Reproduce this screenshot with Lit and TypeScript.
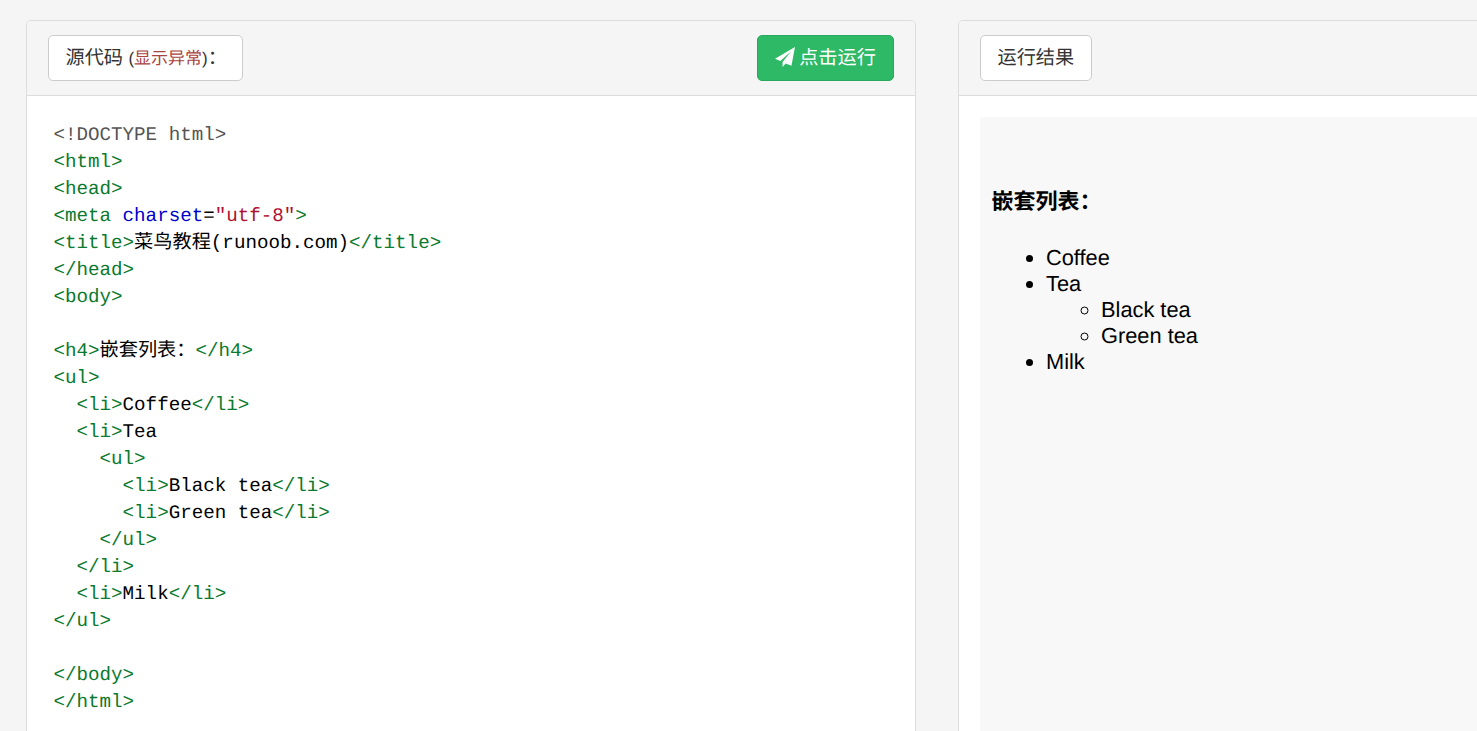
import { LitElement, html, css } from "lit";
import { customElement } from "lit/decorators.js";

const T = (s: string) => html`<span class="tag">${s}</span>`;

const CODE = [
  html`<span class="doc">&lt;!DOCTYPE html&gt;</span>`,
  T("<html>"),
  T("<head>"),
  html`<span class="tag">&lt;meta</span> <span class="attr">charset</span>=<span class="str">"utf-8"</span><span class="tag">&gt;</span>`,
  html`${T("<title>")}菜鸟教程(runoob.com)${T("</title>")}`,
  T("</head>"),
  T("<body>"),
  html``,
  html`${T("<h4>")}嵌套列表：${T("</h4>")}`,
  T("<ul>"),
  html`  ${T("<li>")}Coffee${T("</li>")}`,
  html`  ${T("<li>")}Tea`,
  html`    ${T("<ul>")}`,
  html`      ${T("<li>")}Black tea${T("</li>")}`,
  html`      ${T("<li>")}Green tea${T("</li>")}`,
  html`    ${T("</ul>")}`,
  html`  ${T("</li>")}`,
  html`  ${T("<li>")}Milk${T("</li>")}`,
  T("</ul>"),
  html``,
  T("</body>"),
  T("</html>"),
];

@customElement("app-root")
export class AppRoot extends LitElement {
  static styles = css`
    :host {
      display: block;
      height: 731px;
      overflow: hidden;
      background: #f5f5f5;
      font-family: "Liberation Sans", "Noto Sans CJK SC", sans-serif;
      text-rendering: geometricPrecision;
    }
    .page {
      display: flex;
      gap: 42px;
      padding: 20px 0 0 26px;
      width: 2000px;
      box-sizing: border-box;
    }
    .panel {
      flex: 0 0 890px;
      box-sizing: border-box;
      height: 900px;
      background: #fff;
      border: 1px solid #ddd;
      border-radius: 5px;
    }
    .head {
      display: flex;
      align-items: center;
      justify-content: space-between;
      box-sizing: border-box;
      height: 75px;
      padding: 0 21px;
      background: #f5f5f5;
      border-bottom: 1px solid #ddd;
      border-radius: 5px 5px 0 0;
    }
    .label {
      box-sizing: border-box;
      height: 46px;
      display: flex;
      align-items: center;
      padding-bottom: 4px;
      background: #fff;
      border: 1px solid #ccc;
      border-radius: 5px;
      color: #333;
      font-size: 19.2px;
      white-space: pre;
    }
    .src { width: 195px; padding-left: 16.500px; }
    .res { width: 112px; padding-left: 16.500px; }
    .small { font-size: 17px; }
    .warn { color: #a94442; }
    .run {
      box-sizing: border-box;
      width: 137px;
      height: 46px;
      display: flex;
      align-items: center;
      justify-content: center;
      gap: 4px;
      padding-bottom: 4px;
      background: #2eb966;
      border: 1px solid #27a85c;
      border-radius: 5px;
      color: #fff;
      font-size: 19.2px;
    }
    .run svg { width: 20px; height: 20px; fill: #fff; margin-top: 1px; }
    .code {
      padding: 26px 26.500px 0;
      font-family: "Liberation Mono", "Noto Sans CJK SC", monospace;
      font-size: 19.2px;
      line-height: 27px;
      color: #000;
    }
    .line { height: 27px; white-space: pre; }
    .tag { color: #0a7a2e; }
    .doc { color: #555; }
    .attr { color: #0000cc; }
    .str { color: #b01030; }
    .body { padding: 21px 21px 0; }
    .out {
      height: 800px;
      box-sizing: border-box;
      padding: 70px 12px 0;
      background: #f8f8f8;
      color: #000;
      font-size: 21.8px;
      line-height: 26px;
    }
    h4 {
      margin: 0 0 29px -0.5px;
      padding-top: 1px;
      font-size: 22px;
      line-height: 28px;
      font-weight: 700;
    }
    ul { margin: 0; padding-left: 54px; }
    ul ul { padding-left: 55px; }
  `;

  render() {
    return html`<div class="page">
      <section class="panel">
        <div class="head">
          <div class="label src">源代码 <span class="small">(<span class="warn">显示异常</span>)</span>：</div>
          <div class="run">
            <svg viewBox="0 0 18 18"><path d="M18 0 L0 10.500 L4.800 12.600 L14.500 3.800 L6.800 13.600 V18 L9.600 14.800 L14.800 16.800 Z"/></svg>
            <span>点击运行</span>
          </div>
        </div>
        <div class="code">${CODE.map((l) => html`<div class="line">${l}</div>`)}</div>
      </section>
      <section class="panel">
        <div class="head"><div class="label res">运行结果</div></div>
        <div class="body">
          <div class="out">
            <h4>嵌套列表：</h4>
            <ul>
              <li>Coffee</li>
              <li>Tea
                <ul>
                  <li>Black tea</li>
                  <li>Green tea</li>
                </ul>
              </li>
              <li>Milk</li>
            </ul>
          </div>
        </div>
      </section>
    </div>`;
  }
}
